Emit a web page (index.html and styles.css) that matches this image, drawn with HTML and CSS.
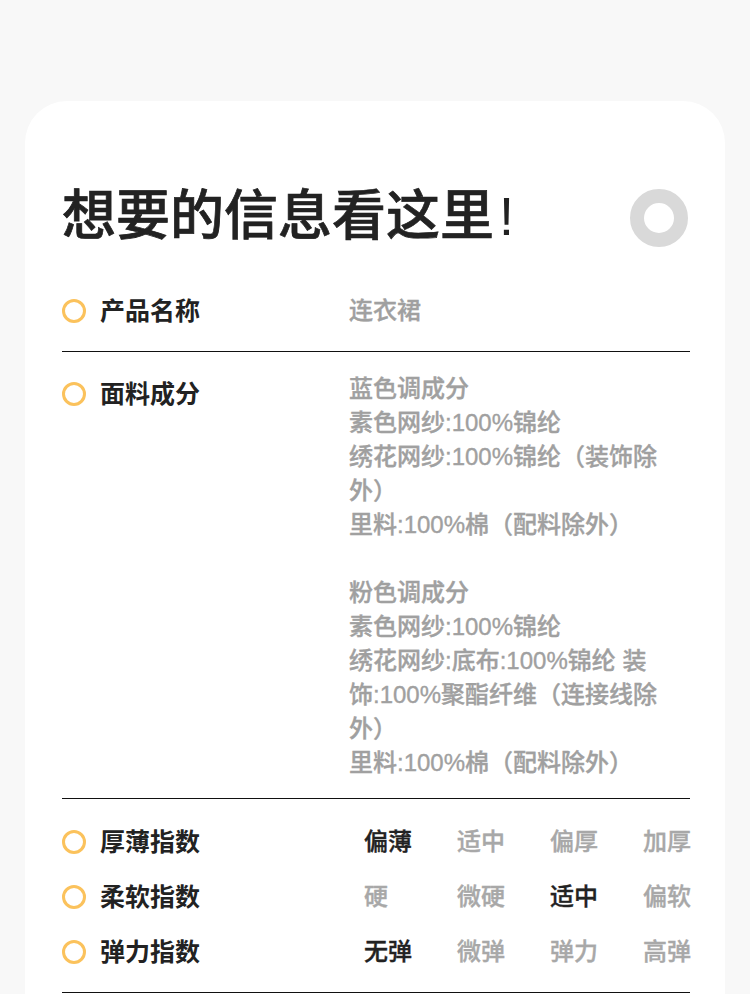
FILE: index.html
```html
<!DOCTYPE html>
<html lang="zh-CN">
<head>
<meta charset="utf-8">
<title>想要的信息看这里</title>
<link rel="stylesheet" href="styles.css">
</head>
<body>
<div class="card">
  <div class="header">
    <h1 class="title">想要的信息看这里<span class="bang">!</span></h1>
    <span class="ring-gray"></span>
  </div>

  <div class="row row-name">
    <div class="label"><span class="dot"></span>产品名称</div>
    <div class="value">连衣裙</div>
  </div>

  <div class="row row-fabric">
    <div class="label label-low"><span class="dot"></span>面料成分</div>
    <div class="value">
      <p class="group">蓝色调成分<br>素色网纱:100%锦纶<br>绣花网纱:100%锦纶（装饰除外）<br>里料:100%棉（配料除外）</p>
      <p class="group">粉色调成分<br>素色网纱:100%锦纶<br>绣花网纱:底布:100%锦纶 装饰:100%聚酯纤维（连接线除外）<br>里料:100%棉（配料除外）</p>
    </div>
  </div>

  <div class="row row-index">
    <div class="index-line">
      <div class="label"><span class="dot"></span>厚薄指数</div>
      <div class="options"><span class="opt on">偏薄</span><span class="opt">适中</span><span class="opt">偏厚</span><span class="opt">加厚</span></div>
    </div>
    <div class="index-line">
      <div class="label"><span class="dot"></span>柔软指数</div>
      <div class="options"><span class="opt">硬</span><span class="opt">微硬</span><span class="opt on">适中</span><span class="opt">偏软</span></div>
    </div>
    <div class="index-line">
      <div class="label"><span class="dot"></span>弹力指数</div>
      <div class="options"><span class="opt on">无弹</span><span class="opt">微弹</span><span class="opt">弹力</span><span class="opt">高弹</span></div>
    </div>
  </div>
</div>
</body>
</html>
```

FILE: styles.css
```css
* { box-sizing: border-box; }
html, body { margin: 0; padding: 0; }
body {
  background: #f8f8f8;
  font-family: "Liberation Sans", "Noto Sans CJK SC", sans-serif;
  overflow: hidden;
}
.card {
  margin: 101px 25px 0;
  background: #fff;
  border-radius: 42px 42px 0 0;
  padding: 85px 35px 0 37px;
  min-height: 900px;
}
.header {
  display: flex;
  align-items: center;
  justify-content: space-between;
  height: 60px;
  margin-bottom: 48px;
}
.title {
  margin: 0;
  font-family: "Liberation Sans", "Noto Sans CJK SC Medium", "Noto Sans CJK SC", sans-serif;
  font-size: 54px;
  line-height: 60px;
  font-weight: 400;
  color: #222;
  -webkit-text-stroke: 0.7px #222;
}
.bang {
  -webkit-text-stroke: 0;
  padding-left: 5px;
}
.ring-gray {
  width: 58px;
  height: 58px;
  border-radius: 50%;
  border: 14px solid #d9d9d9;
  margin-right: 2px;
  margin-top: 4px;
}
.row {
  display: flex;
  border-bottom: 1px solid #111;
  font-size: 24px;
  line-height: 34px;
}
.row-name { padding: 0 0 23px; }
.row-fabric { padding: 20px 0 18px; }
.row-index {
  flex-direction: column;
  gap: 21px;
  padding: 26px 0 23px;
}
.label {
  width: 287px;
  flex: none;
  display: flex;
  align-items: center;
  gap: 14px;
  font-size: 25px;
  font-weight: 700;
  color: #222;
  height: 34px;
}
.label-low { margin-top: 5px; }
.dot {
  width: 24px;
  height: 24px;
  border-radius: 50%;
  border: 3px solid #fbc25c;
  flex: none;
}
.value {
  width: 314px;
  font-family: "Liberation Sans", "Noto Sans CJK SC Medium", "Noto Sans CJK SC", sans-serif;
  color: #a0a0a0;
  font-weight: 400;
  -webkit-text-stroke: 0.35px #a0a0a0;
}
.group { margin: 0; }
.group + .group { margin-top: 34px; }
.index-line { display: flex; }
.options {
  display: grid;
  grid-template-columns: repeat(4, 45px);
  column-gap: 48px;
  margin-left: 15px;
  font-family: "Liberation Sans", "Noto Sans CJK SC Medium", "Noto Sans CJK SC", sans-serif;
  color: #a8a8a8;
  font-weight: 400;
  white-space: nowrap;
  -webkit-text-stroke: 0.35px currentColor;
}
.opt.on { color: #222; }
```
